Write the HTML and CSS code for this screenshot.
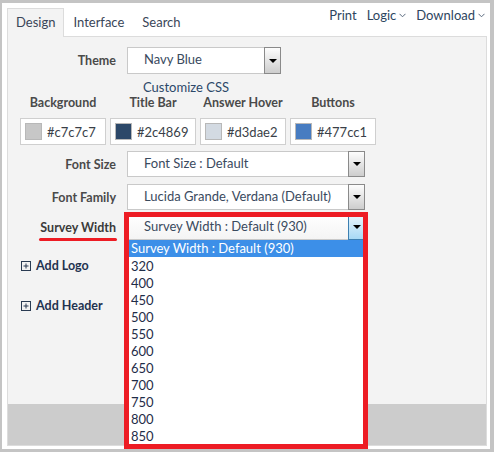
FILE: index.html
```html
<!DOCTYPE html>
<html lang="en">
<head>
    <meta charset="UTF-8">
    <title>Survey Theme</title>
    <link rel="stylesheet" href="styles.css">
</head>
<body>
    <div class="window">
        <div class="topbar">
            <div class="tabs">
                <div class="tab active">Design</div>
                <div class="tab">Interface</div>
                <div class="tab">Search</div>
            </div>
            <div class="links">
                <span class="link">Print</span>
                <span class="link">Logic<svg class="chev" width="7" height="5" viewBox="0 0 7 5"><polyline points="0.5,0.8 3.5,3.8 6.5,0.8" fill="none" stroke="#5a6a7e" stroke-width="1"/></svg></span>
                <span class="link">Download<svg class="chev" width="7" height="5" viewBox="0 0 7 5"><polyline points="0.5,0.8 3.5,3.8 6.5,0.8" fill="none" stroke="#5a6a7e" stroke-width="1"/></svg></span>
            </div>
        </div>

        <div class="panel">
            <div class="panel-body">
                <div class="row theme-row">
                    <label class="lbl">Theme</label>
                    <div class="select theme-select">
                        <span class="sel-text">Navy Blue</span>
                        <span class="arrow"><i></i></span>
                    </div>
                </div>

                <div class="customize">Customize CSS</div>

                <div class="colors">
                    <div class="color">
                        <div class="color-lbl">Background</div>
                        <div class="color-box"><span class="swatch" style="background:#c7c7c7"></span>#c7c7c7</div>
                    </div>
                    <div class="color">
                        <div class="color-lbl">Title Bar</div>
                        <div class="color-box"><span class="swatch" style="background:#2c4869"></span>#2c4869</div>
                    </div>
                    <div class="color">
                        <div class="color-lbl">Answer Hover</div>
                        <div class="color-box"><span class="swatch" style="background:#d3dae2"></span>#d3dae2</div>
                    </div>
                    <div class="color">
                        <div class="color-lbl">Buttons</div>
                        <div class="color-box"><span class="swatch" style="background:#477cc1"></span>#477cc1</div>
                    </div>
                </div>

                <div class="row size-row">
                    <label class="lbl">Font Size</label>
                    <div class="select wide">
                        <span class="sel-text">Font Size : Default</span>
                        <span class="arrow"><i></i></span>
                    </div>
                </div>

                <div class="row family-row">
                    <label class="lbl">Font Family</label>
                    <div class="select wide">
                        <span class="sel-text">Lucida Grande, Verdana (Default)</span>
                        <span class="arrow"><i></i></span>
                    </div>
                </div>

                <div class="row width-row">
                    <label class="lbl"><span class="marked">Survey Width</span></label>
                    <div class="select wide open">
                        <span class="sel-text">Survey Width : Default (930)</span>
                        <span class="arrow hot"><i></i></span>
                        <ul class="options">
                            <li class="picked">Survey Width : Default (930)</li>
                            <li>320</li>
                            <li>400</li>
                            <li>450</li>
                            <li>500</li>
                            <li>550</li>
                            <li>600</li>
                            <li>650</li>
                            <li>700</li>
                            <li>750</li>
                            <li>800</li>
                            <li>850</li>
                        </ul>
                    </div>
                </div>

                <div class="add add-logo">
                    <svg width="10" height="10" viewBox="0 0 10 10"><rect x="0.5" y="0.5" width="9" height="9" fill="none" stroke="#2a3b52"/><path d="M2.5 5h5M5 2.5v5" stroke="#2a3b52"/></svg>
                    Add Logo
                </div>
                <div class="add add-header">
                    <svg width="10" height="10" viewBox="0 0 10 10"><rect x="0.5" y="0.5" width="9" height="9" fill="none" stroke="#2a3b52"/><path d="M2.5 5h5M5 2.5v5" stroke="#2a3b52"/></svg>
                    Add Header
                </div>
            </div>
            <div class="panel-foot"></div>
        </div>

        <div class="callout"></div>
    </div>
</body>
</html>
```

FILE: styles.css
```css
body {
    margin: 0;
    width: 494px;
    height: 452px;
    overflow: hidden;
    background: #c4c4c4;
    font-family: Lato, "Liberation Sans", sans-serif;
    font-size: 13px;
}

.window {
    position: relative;
    margin: 3px 0 0 2px;
    width: 488px;
    height: 446px;
    box-sizing: border-box;
    padding: 5px 3px 0 5px;
    background: #fff;
}

.topbar {
    display: flex;
    justify-content: space-between;
    height: 28px;
}

.tabs {
    display: flex;
}

.tab {
    height: 28px;
    line-height: 27px;
    padding: 0 8px;
    border: 1px solid transparent;
    border-bottom: none;
    box-sizing: border-box;
    color: #3a4658;
}

.tab.active {
    background: #f3f3f3;
    border-color: #dcdcdc;
    position: relative;
    z-index: 1;
    height: 29px;
}

.links {
    display: flex;
    gap: 10px;
    padding-right: 2px;
    line-height: 16px;
    margin-top: -1px;
    color: #2e4560;
}

.chev {
    margin-left: 3px;
    vertical-align: 2px;
}

.panel {
    border: 1px solid #dcdcdc;
    height: 410px;
    box-sizing: border-box;
    background: #f3f3f3;
}

.panel-body {
    height: 367px;
    padding-top: 10px;
    box-sizing: border-box;
}

.panel-foot {
    height: 41px;
    background: #cccccc;
}

.row {
    display: grid;
    grid-template-columns: 108px auto;
    column-gap: 11px;
    align-items: center;
}

.lbl {
    text-align: right;
    font-weight: bold;
    font-size: 12.5px;
    color: #4a4a4a;
}

.select {
    position: relative;
    display: flex;
    align-items: stretch;
    height: 26px;
    border: 1px solid #c9c9c9;
    box-sizing: border-box;
    background: #fff;
    color: #3a4a5e;
}

.theme-select {
    width: 154px;
    height: 27px;
}

.wide {
    width: 238px;
}

.sel-text {
    flex: 1;
    padding-left: 16px;
    line-height: 22px;
}

.arrow {
    width: 17px;
    margin: -1px -1px -1px 0;
    border: 1px solid #8a8a8a;
    box-sizing: border-box;
    background: linear-gradient(#fdfdfd, #cdcdcd);
    display: flex;
    align-items: center;
    justify-content: center;
}

.arrow i {
    width: 0;
    height: 0;
    border-left: 4px solid transparent;
    border-right: 4px solid transparent;
    border-top: 4px solid #000;
}

.arrow.hot {
    border-color: #3c7fb1;
    background: linear-gradient(#eaf6fd, #a7d9f5);
}

.open {
    background: linear-gradient(#ffffff, #f4f4f4);
}

.customize {
    margin: 5px 0 0 135px;
    line-height: 16px;
    color: #2c4869;
}

.colors {
    display: flex;
    gap: 4px;
    padding-left: 12px;
}

.color {
    width: 86px;
}

.color-lbl {
    text-align: center;
    font-weight: bold;
    font-size: 12.5px;
    color: #4a4a4a;
    line-height: 16px;
    height: 23px;
}

.color-box {
    display: flex;
    align-items: center;
    height: 27px;
    border: 1px solid #cfcfcf;
    box-sizing: border-box;
    background: #fff;
    color: #3a3f48;
    padding-left: 4px;
}

.swatch {
    width: 17px;
    height: 17px;
    box-sizing: border-box;
    border: 1px solid #b8b8b8;
    margin-right: 5px;
}

.size-row {
    margin-top: 6px;
}

.family-row {
    margin-top: 7px;
}

.width-row {
    margin-top: 4px;
}

.marked {
    position: relative;
    color: #3a3a3a;
}

.marked::after {
    content: "";
    position: absolute;
    left: -1px;
    right: -1px;
    bottom: -6px;
    height: 3px;
    border-radius: 2px;
    background: #ed1c24;
}

.options {
    position: absolute;
    top: 100%;
    left: -1px;
    right: -1px;
    margin: 1px 0 0;
    padding: 0;
    list-style: none;
    background: #fff;
    z-index: 2;
}

.options li {
    height: 17px;
    line-height: 19px;
    padding-left: 4px;
    color: #1f2d48;
}

.options li.picked {
    background: #3c8fe8;
    color: #fff;
    line-height: 17px;
}

.add {
    display: flex;
    align-items: center;
    gap: 5px;
    padding-left: 13px;
    line-height: 16px;
    font-weight: bold;
    font-size: 12.5px;
    color: #1f3250;
}

.add-logo {
    margin-top: 18px;
}

.add-header {
    margin-top: 24px;
}

.callout {
    position: absolute;
    left: 122px;
    top: 209px;
    width: 244px;
    height: 237px;
    border: 5px solid #ed1c24;
    box-sizing: border-box;
    z-index: 3;
}
```
